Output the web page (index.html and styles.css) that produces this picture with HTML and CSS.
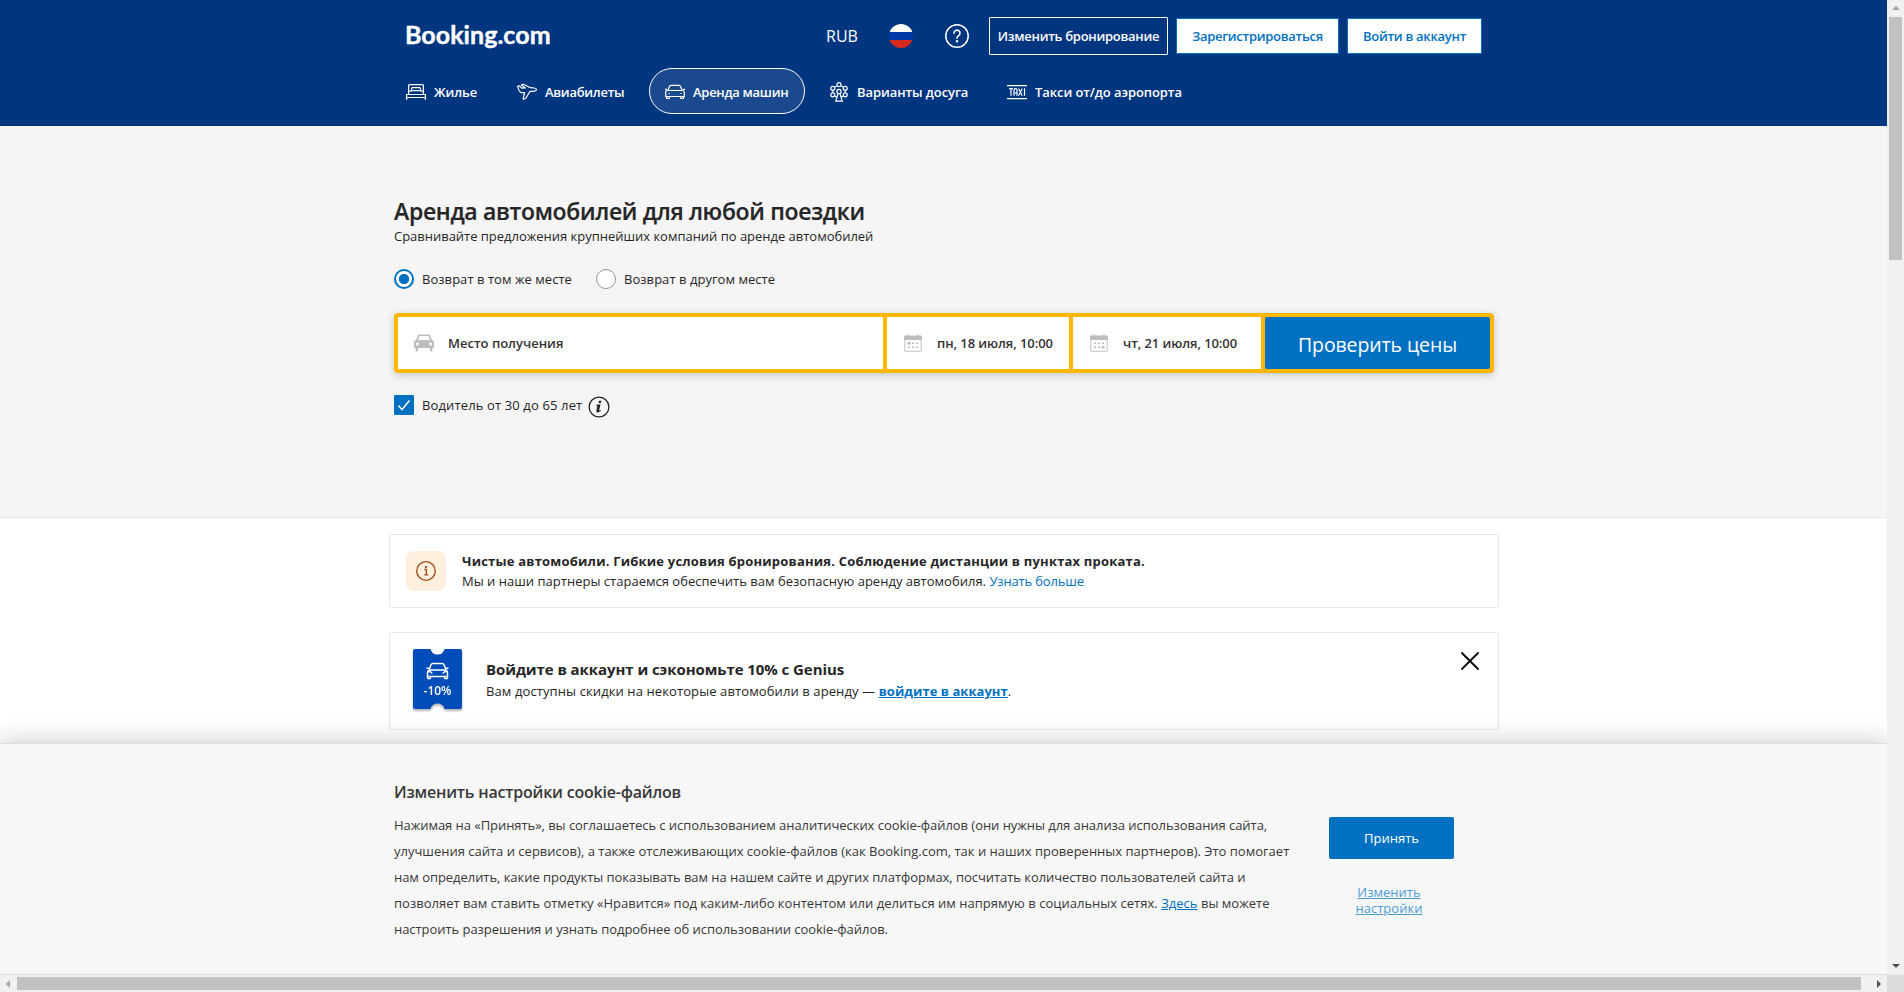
FILE: index.html
```html
<!DOCTYPE html>
<html lang="ru">
<head>
<meta charset="utf-8">
<title>Booking.com</title>
<link rel="stylesheet" href="styles.css">
</head>
<body>
<div class="window">
  <div class="viewport">
    <header class="header">
      <div class="topbar">
        <a class="logo">Booking.com</a>
        <div class="tools">
          <span class="currency">RUB</span>
          <svg class="flag" viewBox="0 0 24 24"><clipPath id="round"><circle cx="12" cy="12" r="12"/></clipPath><g clip-path="url(#round)"><path fill="#fff" d="M0 0h24v8H0z"/><path fill="#0039a6" d="M0 8h24v8H0z"/><path fill="#d52b1e" d="M0 16h24v8H0z"/></g></svg>
          <svg class="help" viewBox="0 0 24 24" fill="none" stroke="#fff" stroke-width="1.5" stroke-linecap="round"><circle cx="12" cy="12" r="11.2"/><path d="M9 9.200a3 3 0 1 1 4.600 2.500c-1 .7-1.600 1.200-1.600 2.500"/><circle cx="12" cy="17.300" r=".5" fill="#fff"/></svg>
          <a class="btn btn-outline">Изменить бронирование</a>
          <a class="btn btn-light btn-register">Зарегистрироваться</a>
          <a class="btn btn-light btn-login">Войти в аккаунт</a>
        </div>
      </div>
      <nav class="nav">
        <a class="nav-item nav-stays"><svg viewBox="0 0 20 18" fill="none" stroke="#fff" stroke-width="1.200"><path d="M.6 17v-5.500h18.800V17M.6 14.500h18.800M2.600 11.500V2.600q0-1 1-1h12.800q1 0 1 1v8.900M5.500 8V5.600q0-.9.900-.9h7.200q.9 0 .9.900V8M2.600 8.200h3M14.500 8.200h3M5.500 7.600h9"/></svg><span>Жилье</span></a>
        <a class="nav-item nav-flights"><svg viewBox="0 0 20 18" fill="none" stroke="#fff" stroke-width="1.200" stroke-linejoin="round"><path d="M.7 3.300l1.700-.4 2.300 2.200 3.600-.2L4.300 2.100l2-.8 7.200 3.400 3.700.3c1.300.2 2.300.9 2.200 1.700-.1.900-1.300 1.400-2.500 1.500l-4.200.5-4 6.800-2.600.6 1.600-6.600-3.300.1C2.600 9.200 1.400 6.300.7 3.300z"/></svg><span>Авиабилеты</span></a>
        <a class="nav-item nav-cars"><svg viewBox="0 0 20 18" fill="none" stroke="#fff" stroke-width="1.200" stroke-linejoin="round"><path d="M2.800 7.500L4.600 3.300q.4-1 1.600-1h7.600q1.200 0 1.600 1l1.800 4.200M.7 9.500q0-2 2-2h14.600q2 0 2 2v4H.7zM1.500 13.500v1.900h2.700v-1.900M15.800 13.500v1.900h2.700v-1.900M0 6.300h2M18 6.300h2M3.500 10.500h1.200M15.300 10.500h1.200"/></svg><span>Аренда машин</span></a>
        <a class="nav-item nav-fun"><svg viewBox="0 0 18 20" fill="none" stroke="#fff" stroke-width="1.200"><circle cx="9" cy="9.500" r="2.100"/><circle cx="9" cy="2.700" r="2"/><circle cx="2.800" cy="6.300" r="2"/><circle cx="15.200" cy="6.300" r="2"/><circle cx="2.800" cy="12.800" r="2"/><circle cx="15.200" cy="12.800" r="2"/><path d="M4.600 5.200l2.600-1.400M13.400 5.200l-2.600-1.400M2.800 8.300v2.500M15.200 8.300v2.500M8 11.500L5.800 19.200h6.400L10 11.500M4.600 14l2 1M13.400 14l-2 1"/></svg><span>Варианты досуга</span></a>
        <a class="nav-item nav-taxi"><svg viewBox="0 0 20 18" fill="none" stroke="#fff" stroke-width="1.200"><path d="M0 2.600h20M0 15.700h20M2 5.700h4M4 5.700v7M7 12.700V7l1-1.300h1L10 7v5.700M7 10h3M11.500 5.500l3.700 7.200M15.200 5.500l-3.700 7.200M17.500 5.300v7.400"/></svg><span>Такси от/до аэропорта</span></a>
      </nav>
    </header>

    <section class="hero">
      <h1>Аренда автомобилей для любой поездки</h1>
      <p class="lead">Сравнивайте предложения крупнейших компаний по аренде автомобилей</p>
      <div class="radios">
        <label class="radio"><i class="dot dot-on"></i><span>Возврат в том же месте</span></label>
        <label class="radio"><i class="dot"></i><span>Возврат в другом месте</span></label>
      </div>
      <div class="search">
        <div class="field field-place"><svg viewBox="0 0 20 18"><path fill="#bdbdbd" fill-rule="evenodd" d="M5.200.5h9.600q1.200 0 1.600 1l1.600 4.700 1.200.4q.8.700.8 1.800v5.600h-1.500v2.300q0 1.200-1.300 1.200t-1.300-1.200V14H4.100v2.300q0 1.200-1.300 1.200t-1.300-1.200V14H0V8.400Q0 7.300.8 6.600L2 6.200l1.600-4.700q.4-1 1.600-1zM5.300 2L4 6h12l-1.300-4zM3.500 8.500a1.500 1.500 0 1 0 .01 0zM16.500 8.500a1.500 1.500 0 1 0 .01 0z"/></svg><span>Место получения</span></div>
        <div class="field field-from"><svg viewBox="0 0 18 18"><path fill="#bdbdbd" d="M0 2.500q0-1 1-1h2.500V0h1v1.500h9V0h1v1.500H17q1 0 1 1V6H0z"/><path fill="none" stroke="#cfcfcf" stroke-width="1.300" d="M.7 5.500v10.800q0 1 1 1h14.600q1 0 1-1V5.500"/><path fill="#bdbdbd" d="M3.500 8h3v2.500h-3zM8 8.500h2v1.500H8zM12 8.500h2v1.500h-2zM4 12.500h2V14H4zM8 12.500h2V14H8zM12 12.500h2V14h-2z"/></svg><span>пн, 18 июля, 10:00</span></div>
        <div class="field field-to"><svg viewBox="0 0 18 18"><path fill="#bdbdbd" d="M0 2.500q0-1 1-1h2.500V0h1v1.500h9V0h1v1.500H17q1 0 1 1V6H0z"/><path fill="none" stroke="#cfcfcf" stroke-width="1.300" d="M.7 5.500v10.800q0 1 1 1h14.600q1 0 1-1V5.500"/><path fill="#bdbdbd" d="M4 8.500h2v1.500H4zM8 8.500h2v1.500H8zM12 8.500h2v1.500h-2zM4 12.500h2V14H4zM8 12.500h2V14H8zM11.500 12h3v2.500h-3z"/></svg><span>чт, 21 июля, 10:00</span></div>
        <button class="submit">Проверить цены</button>
      </div>
      <label class="driver"><svg class="check" viewBox="0 0 20 20"><rect width="20" height="20" rx="1" fill="#0071c2"/><path d="M4.500 10.500l3.500 4 7.500-9" fill="none" stroke="#fff" stroke-width="1.500"/></svg><span>Водитель от 30 до 65 лет</span><svg class="info" viewBox="0 0 22 22"><circle cx="11" cy="11" r="9.900" fill="none" stroke="#222" stroke-width="1.300"/><path fill="#222" d="M11 4.800h2.400l-.5 2.200h-2.400zM8.500 8.800l4-.5-1.400 6.200q0 .7 1.700-.4l.2.600q-1.800 1.800-3.600 1.800-1.500-.2-1-1.900l1-4.500-1.200-.3z"/></svg></label>
    </section>

    <main class="cards">
      <div class="card card-info">
        <div class="tile"><svg viewBox="0 0 20 20" fill="none" stroke="#a04a12" stroke-width="1.300"><circle cx="10" cy="10" r="9.300"/><path d="M8.300 8.500h2v5M8.300 13.800h4"/><circle cx="10" cy="5.900" r=".5"/></svg></div>
        <div class="card-text">
          <b>Чистые автомобили. Гибкие условия бронирования. Соблюдение дистанции в пунктах проката.</b>
          <p>Мы и наши партнеры стараемся обеспечить вам безопасную аренду автомобиля. <a>Узнать больше</a></p>
        </div>
      </div>
      <div class="card card-genius">
        <svg class="ticket" viewBox="0 0 49 60"><path fill="#004cb8" d="M2 0h15.500a7.200 7.200 0 0 0 14 0H47q2 0 2 2v56q0 2-2 2H31.500a7.200 7.200 0 0 0-14 0H2q-2 0-2-2V2q0-2 2-2z"/><path fill="none" stroke="#fff" stroke-width="1.500" stroke-linejoin="round" d="M16 21l2-5.200q.5-1.300 2-1.300h9q1.500 0 2 1.300l2 5.200M14.500 24q0-3 3-3h14q3 0 3 3v3.500h-20zM14.500 27.500v1q0 1.300 1.500 1.300t1.500-1.300v-1M31.500 27.500v1q0 1.300 1.500 1.300t1.500-1.300v-1M13.500 19.300h2.500M33 19.300h2.500M15.500 22.500q3 0 3.500 2M33.500 22.500q-3 0-3.500 2"/><text x="24.500" y="45.500" text-anchor="middle" class="ticket-label">-10%</text></svg>
        <div class="card-text">
          <b>Войдите в аккаунт и сэкономьте 10% с Genius</b>
          <p><span class="genius-body">Вам доступны скидки на некоторые автомобили в аренду — </span><a>войдите в аккаунт</a>.</p>
        </div>
        <svg class="close" viewBox="0 0 18 18"><path d="M1 1l16 16M17 1L1 17" stroke="#000" stroke-width="1.800" stroke-linecap="round"/></svg>
      </div>
    </main>

    <aside class="cookies">
      <div class="cookie-copy">
        <h2>Изменить настройки cookie-файлов</h2>
        <p><span class="tight">Нажимая на «Принять», вы соглашаетесь с использованием аналитических cookie-файлов (они нужны для анализа использования сайта,</span><br>
        улучшения сайта и сервисов), а также отслеживающих cookie-файлов (как Booking.com, так и наших проверенных партнеров). Это помогает<br>
        <span class="tight">нам определить, какие продукты показывать вам на нашем сайте и других платформах, посчитать количество пользователей сайта и</span><br>
        <span class="wide">позволяет вам ставить отметку «Нравится» под каким-либо контентом или делиться им напрямую в социальных сетях. <a>Здесь</a> вы можете</span><br>
        <span class="tight">настроить разрешения и узнать подробнее об использовании cookie-файлов.</span></p>
      </div>
      <div class="cookie-actions">
        <button class="accept">Принять</button>
        <a class="manage">Изменить<br>настройки</a>
      </div>
    </aside>
  </div>
  <div class="vbar"><i class="arrow-up"></i><i class="vthumb"></i><i class="arrow-down"></i></div>
  <div class="hbar"><i class="arrow-left"></i><i class="hthumb"></i><i class="arrow-right"></i></div>
  <div class="corner"></div>
</div>
</body>
</html>
```
FILE: styles.css
```css
* { box-sizing: border-box; }
body { margin: 0; overflow: hidden; background: #fff; color: #262626; font-family: "Open Sans", "Noto Sans", sans-serif; font-size: 13px; line-height: 20px; white-space: nowrap; }
h1, h2, p { margin: 0; }
svg { display: block; flex: none; }
.window { display: grid; grid-template-columns: 1887px 17px; grid-template-rows: 975px 17px; width: 1904px; height: 992px; }
.viewport { display: grid; grid-template-rows: 126px 392px 225px 232px; height: 975px; overflow: hidden; }

.header { background: #003580; color: #fff; padding: 17px 405px 0 406px; }
.topbar { display: flex; justify-content: space-between; height: 51px; }
.logo { font: 700 25px/34px Lato, sans-serif; letter-spacing: .05px; margin-left: -1px; -webkit-text-stroke: .4px #fff; }
.tools { display: flex; align-items: flex-start; }
.currency { font-size: 16px; font-weight: 500; line-height: 38px; width: 31px; }
.flag { width: 24px; height: 24px; margin: 7px 0 0 32px; }
.help { width: 24px; height: 24px; margin: 7px 0 0 32px; }
.btn { display: flex; justify-content: center; font-weight: 600; letter-spacing: -.28px; border-radius: 1px; }
.btn-outline { width: 179px; height: 38px; margin-left: 20px; border: 1px solid #fff; line-height: 37px; }
.btn-light { height: 36px; margin: 1px 0 0 8px; border: 1px solid #0071c2; background: #fff; color: #0071c2; line-height: 35px; }
.btn-register { width: 163px; }
.btn-login { width: 135px; }
.nav { display: flex; height: 46px; margin-left: -16px; }
.nav-item { display: flex; align-items: center; gap: 8px; padding: 0 0 0 16px; font-weight: 600; letter-spacing: -.08px; }
.nav-item span { padding-top: 2px; }
.nav-item svg { width: 20px; height: 18px; margin-top: 2px; }
.nav-stays { width: 111px; }
.nav-flights { width: 148px; letter-spacing: -.28px; }
.nav-cars { width: 156px; padding-left: 15px; letter-spacing: -.28px; border: 1px solid #fff; border-radius: 23px; background: #1a4a8d; }
.nav-fun { width: 185px; margin-left: 9px; }
.nav-item.nav-fun svg { width: 18px; height: 20px; }
.nav-fun span { padding-left: 1px; }
.nav-taxi { margin-left: -8px; }

.hero { background: #f5f5f5; border-bottom: 1px solid #e6e6e6; padding: 69px 393px 0 394px; }
h1 { font-size: 23px; line-height: 32px; font-weight: 600; letter-spacing: -.32px; -webkit-text-stroke: .2px #262626; }
.lead { margin-top: -2px; padding-top: 1px; letter-spacing: -.02px; }
.radios { display: flex; gap: 24px; margin-top: 23px; letter-spacing: .04px; }
.radio { display: flex; gap: 8px; width: 178px; }
.dot { flex: none; width: 20px; height: 20px; border: 1px solid #949494; border-radius: 50%; background: #fff; }
.dot-on { border: 2px solid #0071c2; background: radial-gradient(circle, #0071c2 4.800px, #fff 5.400px); }
.search { display: flex; gap: 4px; height: 60px; margin-top: 24px; padding: 4px; border-radius: 4px; background: #ffb700; box-shadow: 0 2px 8px rgba(0,0,0,.2); }
.field { display: flex; align-items: center; padding-left: 16px; background: #fff; font-weight: 600; color: #333; border-radius: 1px; }
.field-place { width: 485px; gap: 14px; }
.field-from { width: 182px; gap: 15px; padding-left: 17px; letter-spacing: -.08px; }
.field-to { width: 188px; gap: 15px; padding-left: 17px; letter-spacing: -.08px; }
.field-place svg { width: 20px; height: 18px; }
.field-from svg, .field-to svg { width: 18px; height: 18px; }
.submit { width: 225px; border: 0; padding: 4px 0 0; border-radius: 2px; background: #0071c2; color: #fff; font: 500 19.500px/28px "Open Sans", sans-serif; letter-spacing: -.11px; }
.driver { display: flex; height: 24px; margin-top: 22px; letter-spacing: .13px; }
.check { width: 20px; height: 20px; margin-right: 8px; }
.driver span { width: 160px; }
.info { width: 22px; height: 22px; margin: 1px 0 0 6px; }

.cards { padding: 16px 388px 0 389px; }
.card { display: flex; border: 1px solid #e7e7e7; border-radius: 1px; }
.card-info { height: 74px; padding: 16px; gap: 16px; }
.tile { display: flex; align-items: center; justify-content: center; width: 40px; height: 40px; border-radius: 8px; background: #ffefdf; }
.tile svg { width: 20px; height: 20px; }
.card b { display: block; font-weight: 700; }
.card a { color: #0071c2; }
.card-info b { letter-spacing: .2px; }
.card-info p { letter-spacing: .015px; }
.card-info a { letter-spacing: -.16px; }
.card-genius { height: 98px; margin-top: 24px; padding: 16px 19px 0 23px; }
.ticket { width: 49px; height: 60px; margin-right: 24px; overflow: visible; filter: drop-shadow(0 2px 1px rgba(0,0,0,.3)); }
.ticket-label { font: 600 12px "Open Sans", sans-serif; fill: #fff; }
.card-genius .card-text { flex: 1; margin-top: 9px; }
.card-genius b { font-size: 15px; line-height: 23px; letter-spacing: -.07px; }
.genius-body { letter-spacing: .1px; }
.card-genius a { font-weight: 700; letter-spacing: .04px; text-decoration: underline; }
.close { width: 18px; height: 18px; margin-top: 3px; }

.cookies { position: relative; display: flex; border-top: 1px solid #dedede; border-bottom: 1px solid #dedede; background: #f7f7f7; color: #383838; padding: 37px 0 0 394px; box-shadow: 0 0 24px rgba(0,0,0,.24); }
.cookie-copy { width: 935px; }
h2 { font-size: 16px; line-height: 24px; font-weight: 600; letter-spacing: -.2px; margin-top: -1px; }
.cookie-copy p { margin-top: 8px; line-height: 26px; }
.cookie-copy a { color: #0071c2; text-decoration: underline; }
.tight { letter-spacing: -.05px; }
.wide { letter-spacing: .02px; }
.cookie-actions { width: 125px; padding-top: 36px; text-align: center; }
.accept { display: block; width: 125px; height: 42px; border: 0; border-radius: 2px; background: #0071c2; color: #fff; font: 13px/20px "Open Sans", sans-serif; }
.manage { display: block; margin-top: 25px; padding-right: 5px; color: #4c9cd4; line-height: 16px; text-decoration: underline; }

.vbar { display: flex; flex-direction: column; align-items: center; background: #f0f0f0; }
.hbar { display: flex; align-items: center; background: #f0f0f0; }
.corner { background: #dcdcdc; }
.vthumb { width: 13px; height: 243px; margin-top: 7px; background: #c1c1c1; }
.hthumb { width: 1844px; height: 13px; margin-left: 7px; background: #c1c1c1; }
.arrow-up { margin-top: 6px; border: 4px solid transparent; border-top: 0; border-bottom-color: #a3a3a3; }
.arrow-down { margin-top: 704px; border: 4px solid transparent; border-bottom: 0; border-top-color: #505050; }
.arrow-left { margin-left: 6px; border: 4px solid transparent; border-left: 0; border-right-color: #a3a3a3; }
.arrow-right { margin-left: 16px; border: 4px solid transparent; border-right: 0; border-left-color: #505050; }
```
